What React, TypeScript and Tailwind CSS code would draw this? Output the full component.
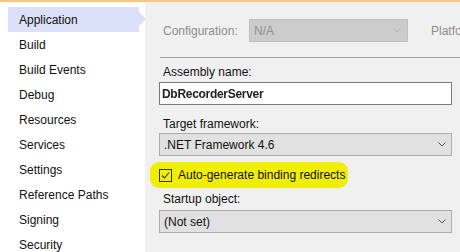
import React from "react";

const font = { fontFamily: '"Liberation Sans", Arial, sans-serif' };

function Chevron({ color }: { color: string }) {
  return (
    <svg width="8" height="5" viewBox="0 0 8 5" className="shrink-0">
      <path d="M0.5 0.5 L4 4 L7.5 0.5" fill="none" stroke={color} strokeWidth="1" />
    </svg>
  );
}

const navItems = [
  "Application",
  "Build",
  "Build Events",
  "Debug",
  "Resources",
  "Services",
  "Settings",
  "Reference Paths",
  "Signing",
  "Security",
];

export default function App() {
  return (
    <div className="w-[460px] h-[252px] overflow-hidden flex flex-col bg-white text-[12px] text-[#111]" style={font}>
      <div className="h-[2px] bg-[#f6c77c] shrink-0" />
      <div className="flex flex-1 min-h-0">
        <div className="w-[145px] shrink-0 bg-white pt-[5px] pl-[8px]">
          {navItems.map((item, i) => (
            <div
              key={item}
              className={
                "relative h-[25px] w-[131px] flex items-center pl-[11px] " +
                (i === 0 ? "bg-[#dce0f8]" : "")
              }
            >
              {item}
              {i === 0 && (
                <div className="absolute left-[131px] top-[5px] w-0 h-0 border-y-[7px] border-y-transparent border-l-[7px] border-l-[#dce0f8]" />
              )}
            </div>
          ))}
        </div>
        <div className="w-[315px] min-w-0 overflow-hidden bg-[#f0f0f0] pl-[14px] pr-[8px] pt-[17px] flex flex-col">
          <div className="flex items-center h-[23px] whitespace-nowrap overflow-hidden -mr-[8px]">
            <span className="ml-[4px] w-[86px] shrink-0 text-[#8c8c8c]">Configuration:</span>
            <div className="w-[159px] shrink-0 h-[23px] bg-[#cccccc] border border-[#bfbfbf] flex items-center justify-between pl-[4px] pr-[6px] text-[#8f8f8f]">
              <span>N/A</span>
              <Chevron color="#b5b5b5" />
            </div>
            <span className="ml-[23px] text-[#8c8c8c]">Platform:</span>
          </div>
          <div className="mt-[15px] ml-[1px] -mr-[8px] h-px bg-[#a0a0a0]" />
          <div className="mt-[6px] ml-[4px] h-[16px] leading-[16px]">Assembly name:</div>
          <div className="mt-[2px] h-[23px] bg-white border border-[#7a7a7a] flex items-center pl-[2px]">
            <span className="font-bold text-[#222] blur-[0.7px] tracking-[-0.3px]">DbRecorderServer</span>
          </div>
          <div className="mt-[11px] ml-[4px] h-[16px] leading-[16px]">Target framework:</div>
          <div className="mt-[1px] h-[23px] bg-[#e1e1e1] border border-[#adadad] flex items-center justify-between pl-[4px] pr-[5px]">
            <span>.NET Framework 4.6</span>
            <Chevron color="#555" />
          </div>
          <div className="mt-[6px] -ml-[9px] w-[198px] h-[26px] bg-[#f1ee05] rounded-[9px] flex items-center pl-[9px] gap-[6px]">
            <svg width="13" height="13" viewBox="0 0 13 13" className="shrink-0">
              <rect x="0.5" y="0.5" width="12" height="12" fill="none" stroke="#333" />
              <path d="M3 6.5 L5.5 9 L10 3.5" fill="none" stroke="#333" strokeWidth="1.1" />
            </svg>
            <span className="whitespace-nowrap">Auto-generate binding redirects</span>
          </div>
          <div className="mt-[3px] ml-[4px] h-[16px] leading-[16px]">Startup object:</div>
          <div className="mt-[3px] h-[23px] bg-[#e1e1e1] border border-[#adadad] flex items-center justify-between pl-[4px] pr-[5px]">
            <span>(Not set)</span>
            <Chevron color="#555" />
          </div>
        </div>
      </div>
    </div>
  );
}
